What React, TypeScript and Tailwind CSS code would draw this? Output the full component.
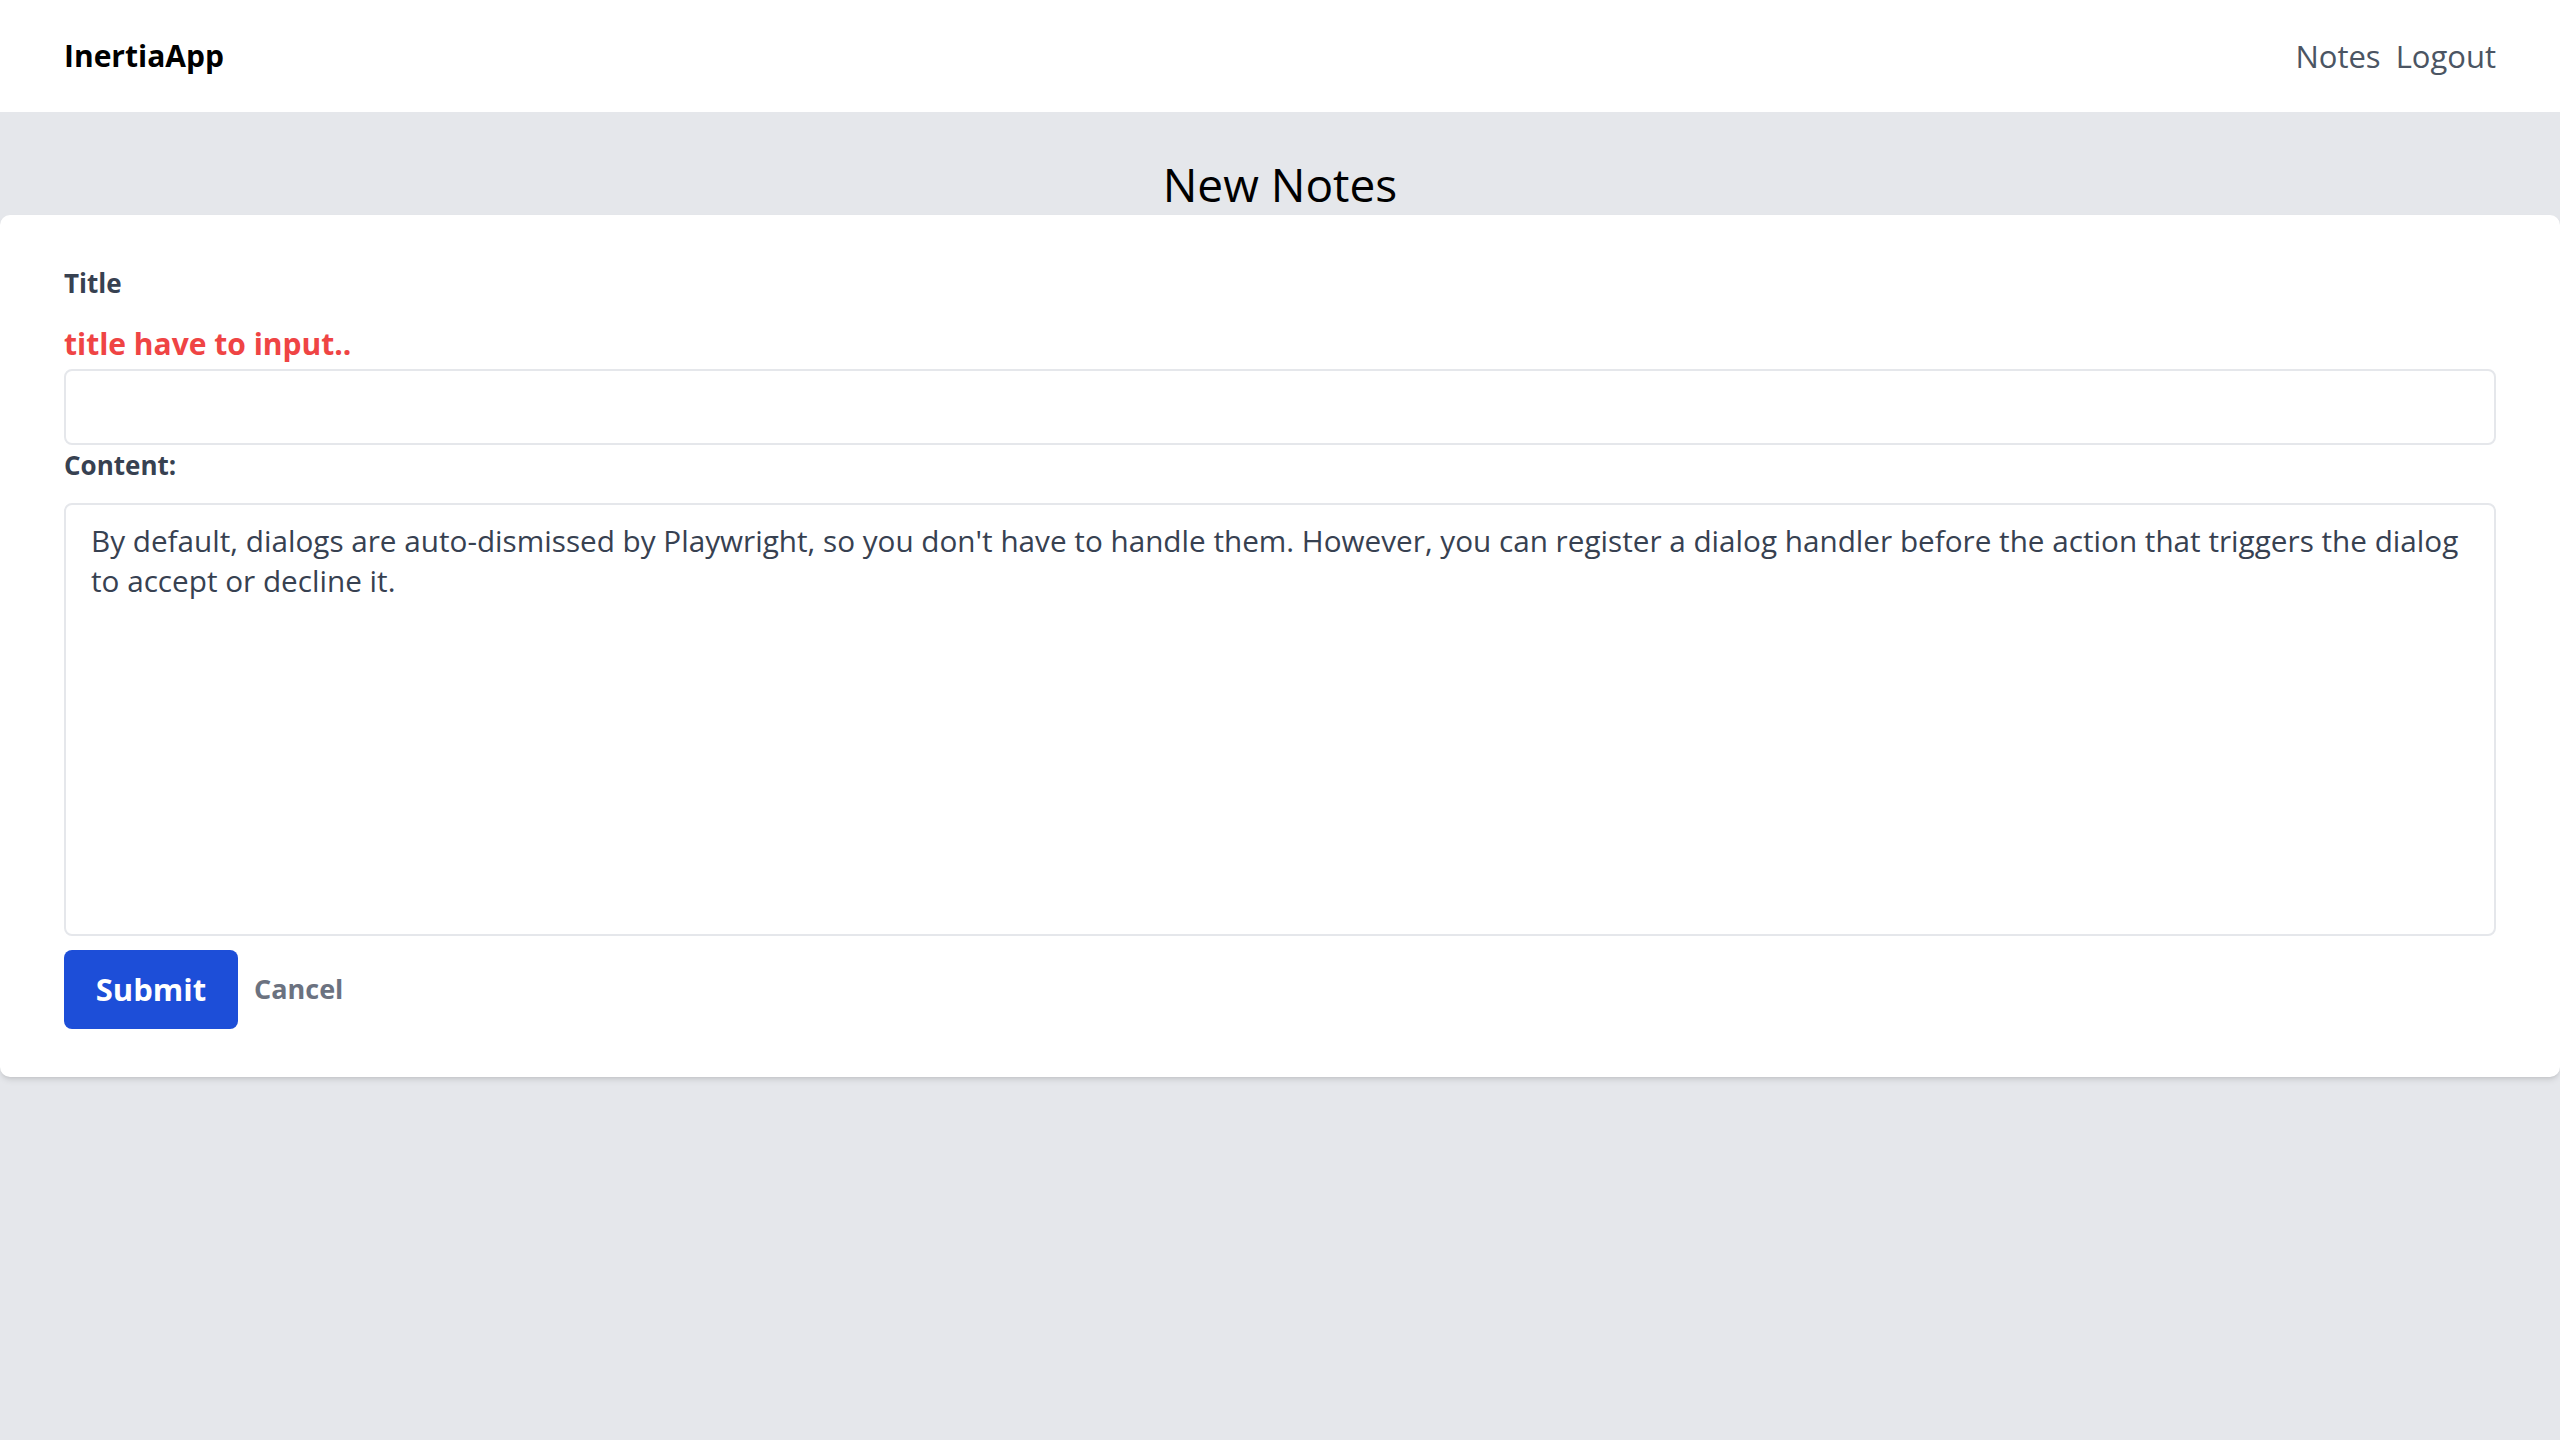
const content =
  "By default, dialogs are auto-dismissed by Playwright, so you don't have to handle them. However, you can register a dialog handler before the action that triggers the dialog to accept or decline it.";

const Header = () => {
  return (
    <header className="flex h-[112px] items-center justify-between bg-white px-16">
      <a href="#" className="text-[30px] font-bold leading-none text-black">
        InertiaApp
      </a>
      <nav className="flex gap-[15px] text-[31px] leading-none text-[#4b5563]">
        <a href="#">Notes</a>
        <a href="#">Logout</a>
      </nav>
    </header>
  );
};

const NoteForm = () => {
  return (
    <form className="flex flex-col rounded-[10px] bg-white px-16 pb-[48px] pt-[54px] shadow-md">
      <label className="text-[26px] font-bold leading-[28px] text-[#374151]">Title</label>
      <p className="mt-[32px] text-[30px] font-bold leading-[30px] text-[#ef4444]">
        title have to input..
      </p>
      <input
        type="text"
        className="mt-[10px] h-[76px] rounded-lg border-2 border-[#e5e7eb] px-[25px] text-[29px] text-[#374151] outline-none"
      />
      <label className="mt-[6px] text-[26px] font-bold leading-[28px] text-[#374151]">
        Content:
      </label>
      <textarea
        defaultValue={content}
        className="mt-[24px] h-[433px] resize-none rounded-lg border-2 border-[#e5e7eb] px-[25px] pt-[16px] text-[29.7px] leading-[40px] text-[#374151] outline-none"
      />
      <div className="mt-[14px] flex items-center gap-[16px]">
        <button
          type="button"
          className="h-[79px] w-[174px] rounded-lg bg-[#1d4ed8] text-[31px] font-bold text-white"
        >
          Submit
        </button>
        <a href="#" className="text-[27px] font-bold text-[#6b7280]">
          Cancel
        </a>
      </div>
    </form>
  );
};

const App = () => {
  return (
    <div className="min-h-screen bg-[#e5e7eb] font-['Open_Sans',sans-serif]">
      <Header />
      <h1 className="pb-[7px] pt-[48px] text-center text-[46px] leading-[48px] text-black">
        New Notes
      </h1>
      <NoteForm />
    </div>
  );
};

export default App;
